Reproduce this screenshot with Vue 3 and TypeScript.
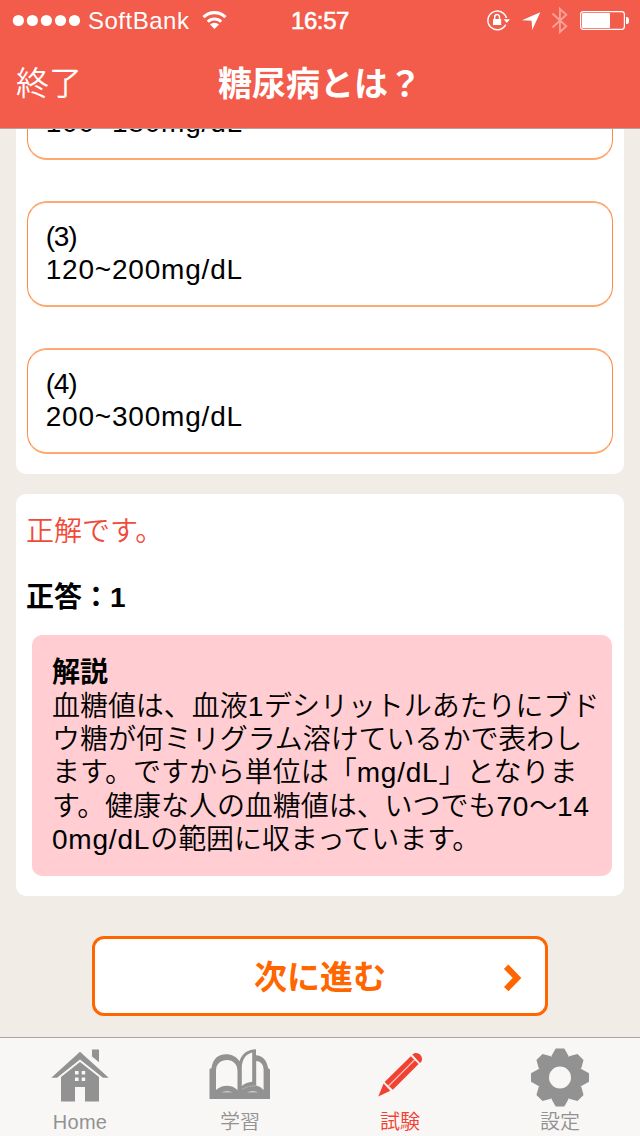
<script setup lang="ts">
interface Choice { no?: number; range: string }

const choices: Choice[] = [
  { range: '100~180mg/dL' },
  { no: 3, range: '120~200mg/dL' },
  { no: 4, range: '200~300mg/dL' },
]

interface Run { text: string; latin?: boolean }

const explanation: Run[][] = [
  [{ text: '血糖値は、血液' }, { text: '1', latin: true }, { text: 'デシリットルあたりにブド' }],
  [{ text: 'ウ糖が何ミリグラム溶けているかで表わし' }],
  [{ text: 'ます。ですから単位は「' }, { text: 'mg/dL', latin: true }, { text: '」となりま' }],
  [{ text: 'す。健康な人の血糖値は、いつでも' }, { text: '70', latin: true }, { text: '〜' }, { text: '14', latin: true }],
  [{ text: '0mg/dL', latin: true }, { text: 'の範囲に収まっています。' }],
]

const dots: number[] = [18.4, 32.4, 46.4, 60.5, 74.5]
const teeth: number[] = [0, 45, 90, 135, 180, 225, 270, 315]
</script>

<template>
  <div class="screen">
    <header class="header">
      <div class="status">
        <div class="status-left">
          <svg class="signal" width="88" height="40" viewBox="0 0 88 40">
            <circle v-for="x in dots" :key="x" :cx="x" cy="20.5" r="5.6" fill="#fff" />
          </svg>
          <span class="carrier">SoftBank</span>
          <svg class="wifi" width="28" height="40" viewBox="200 0 28 40">
            <path d="M203.5 17.2A15.3 15.3 0 0 1 225.5 17.2" fill="none" stroke="#fff" stroke-width="3.2" />
            <path d="M207.8 21.7A9.4 9.4 0 0 1 221.2 21.7" fill="none" stroke="#fff" stroke-width="3" />
            <path d="M214.5 29L210 24.6A6.3 6.3 0 0 1 219 24.6Z" fill="#fff" />
          </svg>
        </div>
        <span class="time">16:57</span>
        <svg class="indicators" width="160" height="40" viewBox="480 0 160 40">
          <path d="M505.7 24.7A9.4 9.4 0 1 1 506.4 18" fill="none" stroke="#fff" stroke-width="1.5" />
          <path d="M503.5 19.3H510L506.8 23Z" fill="#fff" />
          <path d="M494.7 19.5V17.2A2.4 2.7 0 0 1 499.5 17.2V19.5" fill="none" stroke="#fff" stroke-width="1.4" />
          <rect x="493" y="19" width="8.2" height="6" fill="#fff" />
          <path d="M540.3 12.2L522 20.3L531.6 20.8L532.2 30Z" fill="#fff" />
          <path d="M552.5 13.5L566.3 26.2L559.9 32V9L566.3 14.8L552.5 27.5" fill="none" stroke="#fff" stroke-opacity=".43" stroke-width="1.9" />
          <rect x="580.6" y="11.6" width="43.8" height="17.8" rx="2.8" fill="none" stroke="#fff" stroke-width="1.2" />
          <rect x="582" y="13" width="28" height="15" rx="1" fill="#fff" />
          <path d="M626 17H627Q629 17 629 20.5T627 24H626Z" fill="#fff" />
        </svg>
      </div>
      <nav class="navbar">
        <span class="quit">終了</span>
        <h1 class="title">糖尿病とは？</h1>
        <span></span>
      </nav>
    </header>

    <main class="content">
      <section class="card choices">
        <div v-for="c in choices" :key="c.range" class="choice">
          <div class="paren"><template v-if="c.no">({{ c.no }})</template></div>
          <div class="latin">{{ c.range }}</div>
        </div>
      </section>

      <section class="card result">
        <p class="verdict">正解です。</p>
        <p class="answer">正答：1</p>
        <div class="explain">
          <p class="explain-title">解説</p>
          <p v-for="(line, i) in explanation" :key="i" class="line"><span v-for="(run, j) in line" :key="j" :class="{ latin: run.latin }">{{ run.text }}</span></p>
        </div>
      </section>

      <button class="next" type="button">
        <span>次に進む</span>
        <svg class="chevron" width="18" height="28" viewBox="0 0 18 28">
          <path d="M2.2 2.7L13 13.9L2.2 25.1" fill="none" stroke="#ff6600" stroke-width="6.2" />
        </svg>
      </button>
    </main>

    <footer class="tabs">
      <div class="tab">
        <svg width="66" height="62" viewBox="47 1047 66 62">
          <g fill="#929292">
            <path d="M80 1051.8L108.7 1077.7H103L80 1059.4L57 1077.7H51.3Z" />
            <path d="M92 1049.5H99V1062.2L92 1056.5Z" />
            <path fill-rule="evenodd" d="M80 1062L99 1077V1101.5H85V1087H75V1101.5H61V1077ZM75 1071V1074.4H78.6V1071ZM81.7 1071V1074.4H85.2V1071ZM75 1077.6V1081H78.6V1077.6ZM81.7 1077.6V1081H85.2V1077.6Z" />
          </g>
        </svg>
        <span class="home-label">Home</span>
      </div>
      <div class="tab">
        <svg width="66" height="62" viewBox="0 0 66 62">
          <path fill="#929292" fill-rule="evenodd" d="M2.5 52V22L4.5 21C6 11 12 7.3 19 7.3C25 7.3 29.5 10 32.5 14.2C35 7 40 2.5 49 2.3V8.2C55 8.6 60 13 61 21L63 22.5V52ZM9 43V24C9 16.5 14 13 20 13C26 13 30.5 17 30.5 24V43C25 37.2 15 37.2 9 43ZM34.8 39V21C34.8 12 39.5 7 45.2 5.6V34.8C41.5 35 37.5 36.5 34.8 39ZM49.2 38.6V14C54 14.3 56.6 18 56.6 23V43Q53.5 39.5 49.2 38.6Z" />
          <path d="M35 42.2Q41 38.5 49 38.7" fill="none" stroke="#b5b4b4" stroke-width=".8" />
          <path d="M14.5 45.5Q20 42 25.5 45.5ZM40 45.5Q45.5 42 51 45.5Z" fill="#c4c3c2" />
        </svg>
        <span>学習</span>
      </div>
      <div class="tab active">
        <svg width="66" height="62" viewBox="367 1047 66 62">
          <g fill="#f24130">
            <path d="M378.3 1096.6L383.6 1083.4L390.3 1090.8Z" />
            <path d="M384.6 1082L410.8 1056.2L418.6 1064L392.8 1089.8Z" />
            <path d="M412.2 1054.6C416.5 1050 424.5 1055.5 421.3 1061.7L420 1063Z" />
          </g>
          <path d="M388 1086.5L415 1059.5" stroke="#fbc3b9" stroke-width="1.3" />
        </svg>
        <span>試験</span>
      </div>
      <div class="tab">
        <svg width="66" height="62" viewBox="-33 -30.5 66 62">
          <circle r="16.6" fill="none" stroke="#929292" stroke-width="11.2" />
          <path v-for="a in teeth" :key="a" d="M-4.3 -29H4.3L8.6 -21.4L7 -17H-7L-8.6 -21.4Z" fill="#929292" :transform="`rotate(${a})`" />
        </svg>
        <span>設定</span>
      </div>
    </footer>
  </div>
</template>

<style>
body { margin: 0; }
</style>

<style scoped>
.screen {
  width: 640px;
  height: 1136px;
  display: flex;
  flex-direction: column;
  overflow: hidden;
  background: #f1ece6;
  color: #000;
  font-family: "Liberation Sans", "Noto Sans CJK JP", sans-serif;
  font-size: 28px;
  font-weight: 350;
  line-height: 33.3px;
}
p, h1 { margin: 0; }
.header {
  box-sizing: border-box;
  flex: none;
  height: 129px;
  border-bottom: 1px solid #b3a39c;
  background: #f35b4b;
  color: #fff;
}
.status {
  height: 40px;
  display: grid;
  grid-template-columns: 240px 160px 240px;
  grid-template-rows: 40px;
  align-items: start;
  font-size: 24px;
  line-height: 42px;
}
.status-left { display: flex; height: 40px; }
.carrier { width: 112px; letter-spacing: .5px; }
.time {
  text-align: center;
  letter-spacing: -.4px;
  -webkit-text-stroke: .6px #fff;
}
.indicators { justify-self: end; }
.navbar {
  height: 88px;
  display: grid;
  grid-template-columns: 200px 240px 200px;
  align-items: center;
  font-size: 33px;
  line-height: 48px;
}
.quit { padding-left: 16px; }
.title { text-align: center; font-size: 34px; font-weight: 700; white-space: nowrap; }
.content {
  flex: 1;
  min-height: 0;
  display: flex;
  flex-direction: column;
  padding: 0 16px;
}
.card { background: #fff; box-sizing: border-box; flex: none; }
.choices {
  height: 345px;
  overflow: hidden;
  display: flex;
  flex-direction: column;
  justify-content: flex-end;
  gap: 41px;
  padding: 0 10.7px 20px;
  border-radius: 0 0 10px 10px;
}
.choice {
  box-sizing: border-box;
  flex: none;
  height: 106px;
  padding: 17px 18px;
  border-style: solid;
  border-width: 2px 1px;
  border-color: #ffa870 #ff8a42;
  border-radius: 20px;
}
.paren { height: 33.3px; letter-spacing: -1.2px; }
.latin { letter-spacing: .8px; }
.result {
  margin-top: 20px;
  height: 402px;
  padding: 21px 12px 19px 10px;
  border-radius: 10px;
}
.verdict { color: #f24a38; }
.answer { margin-top: 32.6px; font-weight: 700; }
.explain {
  box-sizing: border-box;
  height: 241px;
  margin: 20.8px 0 0 6px;
  padding: 21.5px 20px 19px;
  border-radius: 10px;
  background: #ffcdd2;
}
.explain-title { font-weight: 700; }
.line { white-space: nowrap; }
.line span:not(.latin) { letter-spacing: -.05px; }
.next {
  position: relative;
  box-sizing: border-box;
  width: 456px;
  height: 80px;
  margin: 40px auto 0;
  padding: 3px 0 0;
  border: 3px solid #ff6600;
  border-radius: 12px;
  background: #fff;
  color: #ff6600;
  font: 700 33px/71px "Liberation Sans", "Noto Sans CJK JP", sans-serif;
}
.chevron { position: absolute; right: 23px; top: 25px; }
.tabs {
  box-sizing: border-box;
  flex: none;
  height: 99px;
  border-top: 1px solid #aaa29c;
  background: #f8f7f5;
  display: grid;
  grid-template-columns: repeat(4, 160px);
  color: #929292;
  font-size: 20px;
  line-height: 24px;
}
.tab { display: flex; flex-direction: column; align-items: center; padding-top: 9px; }
.tab svg { flex: none; }
.tab span { margin-top: 1px; }
.tab .home-label { letter-spacing: .3px; }
.active { color: #f24130; }
</style>
